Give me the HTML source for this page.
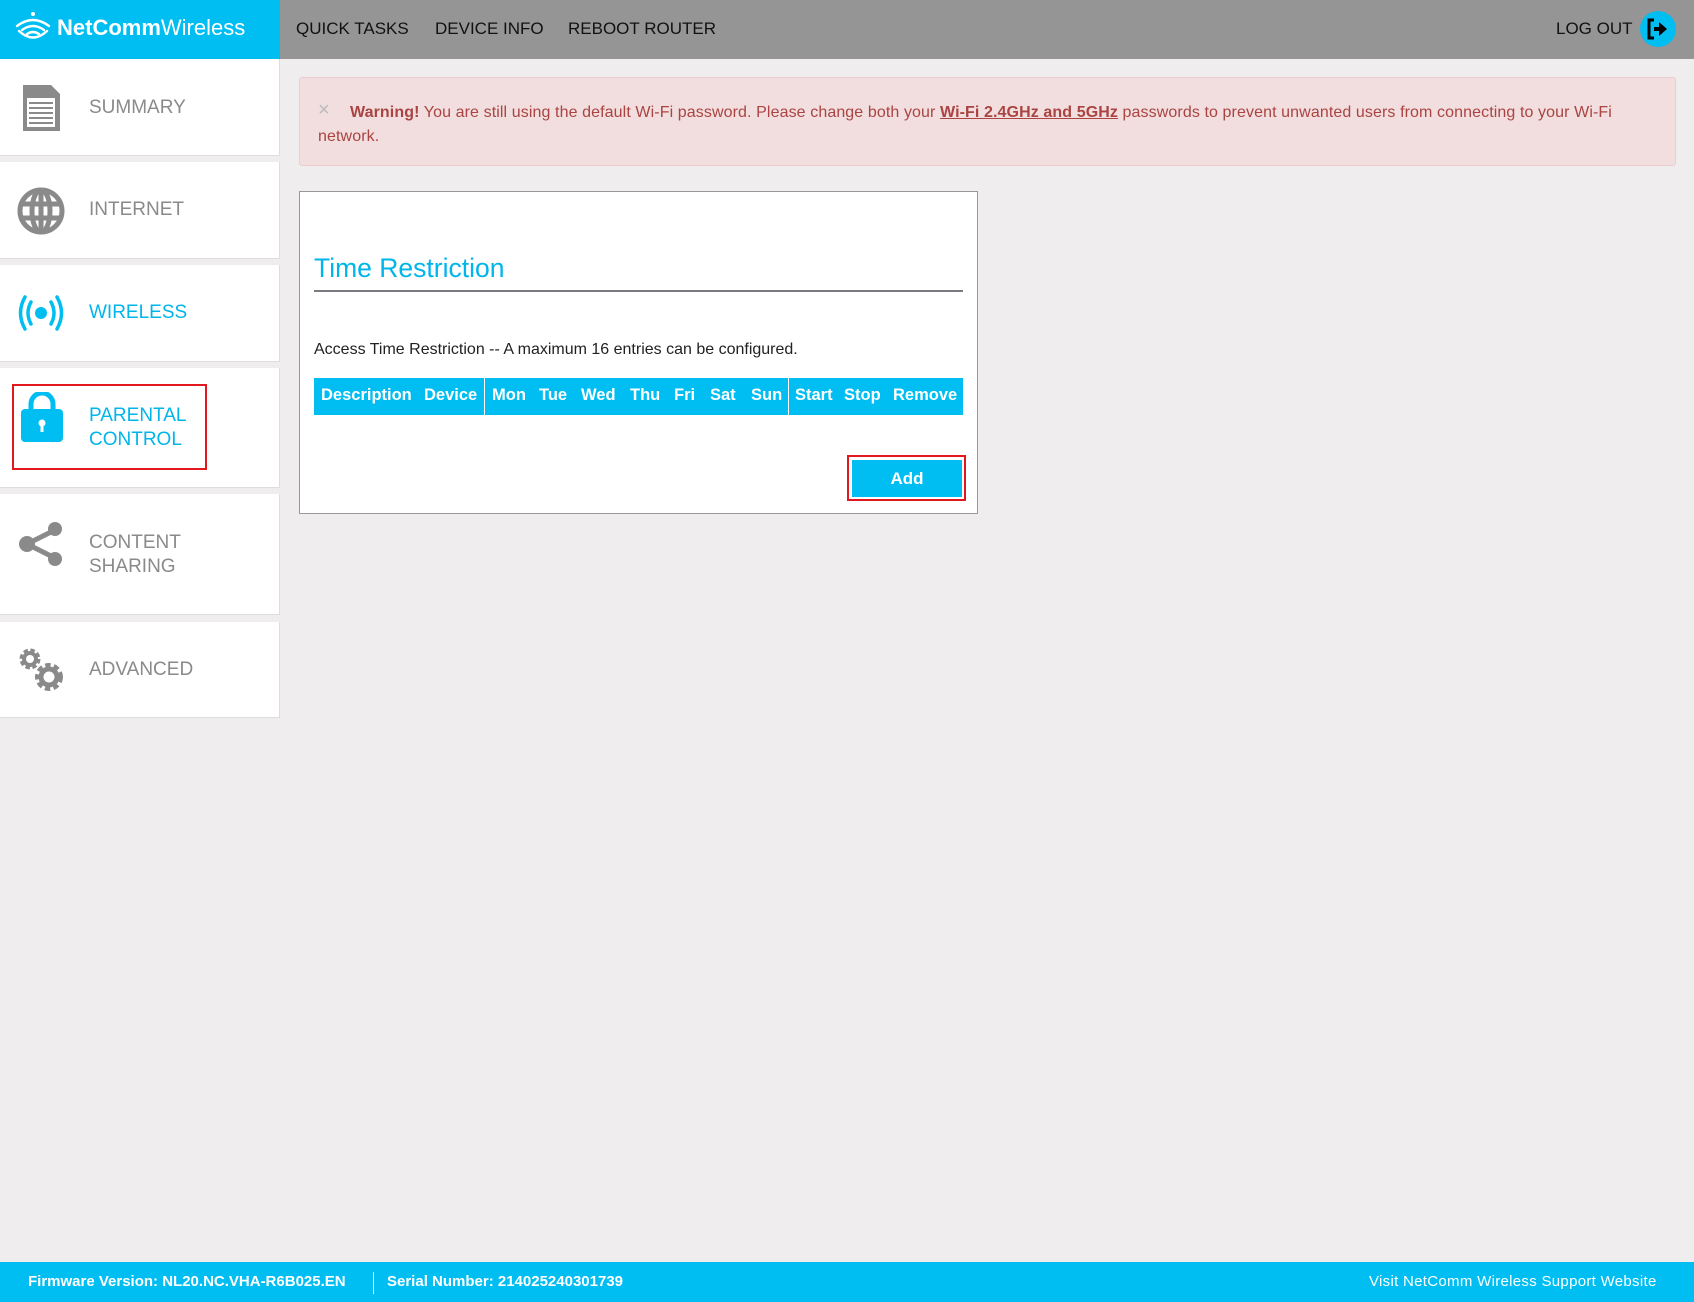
<!DOCTYPE html>
<html><head><meta charset="utf-8"><style>
*{margin:0;padding:0;box-sizing:border-box}
body{width:1694px;height:1302px;background:#efedee;font-family:"Liberation Sans",sans-serif;position:relative;overflow:hidden}
.a{position:absolute}
.hdr{left:0;top:0;width:1694px;height:59px;background:#959595}
.logo{left:0;top:0;width:280px;height:59px;background:#00bef2;color:#fff;font-size:22px;font-weight:bold}
.nav{top:19px;font-size:17px;color:#111}
.side{left:0;width:280px;background:#fff;border-right:1px solid #ddd;border-bottom:1px solid #ddd}
.lbl{left:89px;font-size:19px;color:#8a8a8a;line-height:24px}
.blue{color:#00b5ea}
.th{top:386px;color:#fff;font-size:16.5px;font-weight:bold}
.ft{top:1273px;color:#fff;font-size:15px;font-weight:bold}
</style></head><body>
<div class="a hdr"></div>
<div class="a logo">
<svg class="a" style="left:14px;top:10px" width="38" height="32" viewBox="0 0 38 32"><g fill="none" stroke="#fff" stroke-width="2.4" stroke-linecap="round"><path d="M3 16 Q19 4 35 16"/><path d="M8 20 Q19 12 30 20"/><path d="M13 24 Q19 20 25 24"/><path d="M5 21 Q19 34 33 21"/></g><circle cx="19" cy="4" r="2" fill="#fff"/></svg>
<span class="a" style="left:57px;top:15px">NetComm<span style="font-weight:normal">Wireless</span></span></div>
<span class="a nav" style="left:296px">QUICK TASKS</span>
<span class="a nav" style="left:435px">DEVICE INFO</span>
<span class="a nav" style="left:568px">REBOOT ROUTER</span>
<span class="a nav" style="left:1556px">LOG OUT</span>
<div class="a" style="left:1640px;top:11px;width:36px;height:36px;border-radius:50%;background:#00bef2"></div>
<svg class="a" style="left:1646px;top:17px" width="24" height="24" viewBox="0 0 24 24"><path d="M8 3H3v18h5" fill="none" stroke="#000" stroke-width="3"/><path d="M8 12h9" stroke="#000" stroke-width="4"/><path d="M13 5l8 7-8 7z" fill="#000"/></svg>

<div class="a side" style="top:59px;height:97px"></div>
<div class="a side" style="top:162px;height:97px"></div>
<div class="a side" style="top:265px;height:97px"></div>
<div class="a side" style="top:368px;height:120px"></div>
<div class="a side" style="top:494px;height:121px"></div>
<div class="a side" style="top:622px;height:96px"></div>

<svg class="a" style="left:20px;top:83px" width="42" height="50" viewBox="0 0 42 50"><path d="M3 2h28l9 9v37H3z" fill="#8a8a8a"/><rect x="7" y="15" width="28" height="29" fill="#fff"/><g stroke="#8a8a8a" stroke-width="2"><path d="M9 20h24M9 25h24M9 30h24M9 35h24M9 40h24"/></g></svg>
<span class="a lbl" style="top:96px">SUMMARY</span>
<svg class="a" style="left:16px;top:186px" width="50" height="50" viewBox="0 0 50 50"><g fill="none" stroke="#8a8a8a" stroke-width="5"><circle cx="25" cy="25" r="21"/><ellipse cx="25" cy="25" rx="9" ry="21"/><path d="M4 18h42M4 32h42M25 4v42"/></g></svg>
<span class="a lbl" style="top:198px">INTERNET</span>
<svg class="a" style="left:16px;top:293px" width="50" height="40" viewBox="0 0 50 40"><g fill="none" stroke="#00bef2" stroke-width="3.5" stroke-linecap="round"><path d="M9 4Q0 20 9 36M41 4Q50 20 41 36M15 9Q9 20 15 31M35 9Q41 20 35 31"/></g><circle cx="25" cy="20" r="6" fill="#00bef2"/></svg>
<span class="a lbl blue" style="top:301px">WIRELESS</span>
<svg class="a" style="left:21px;top:392px" width="42" height="50" viewBox="0 0 42 50"><path d="M10 18V12a11 11 0 0 1 22 0v6" fill="none" stroke="#00bef2" stroke-width="5"/><rect x="0" y="17" width="42" height="33" rx="4" fill="#00bef2"/><circle cx="21" cy="31" r="3.5" fill="#fff"/><rect x="19.5" y="31" width="3" height="9" fill="#fff"/></svg>
<span class="a lbl blue" style="top:404px">PARENTAL<br>CONTROL</span>
<div class="a" style="left:12px;top:384px;width:195px;height:86px;border:2px solid #e3181f"></div>
<svg class="a" style="left:17px;top:520px" width="48" height="48" viewBox="0 0 48 48"><path d="M10 24L38 10M10 24L38 38" stroke="#8a8a8a" stroke-width="5"/><circle cx="10" cy="24" r="8" fill="#8a8a8a"/><circle cx="38" cy="9" r="7" fill="#8a8a8a"/><circle cx="38" cy="39" r="7" fill="#8a8a8a"/></svg>
<span class="a lbl" style="top:531px">CONTENT<br>SHARING</span>
<svg class="a" style="left:17px;top:645px" width="50" height="50" viewBox="0 0 50 50"><g fill="none" stroke="#8a8a8a"><circle cx="13" cy="14" r="8" stroke-width="5" stroke-dasharray="4 2.3"/><circle cx="13" cy="14" r="6" stroke-width="4"/><circle cx="32" cy="32" r="11" stroke-width="6" stroke-dasharray="5 3"/><circle cx="32" cy="32" r="8" stroke-width="5"/></g></svg>
<span class="a lbl" style="top:658px">ADVANCED</span>

<div class="a" style="left:299px;top:77px;width:1377px;height:89px;background:#f2dede;border:1px solid #ebccd1;border-radius:3px"></div>
<span class="a" style="left:318px;top:100px;color:#bbb;font-size:20px;line-height:20px">×</span>
<div class="a" style="left:318px;top:101px;width:1350px;font-size:16px;color:#a94442;line-height:24px;text-indent:32px;letter-spacing:0.1px"><b>Warning!</b> You are still using the default Wi-Fi password. Please change both your <b><u>Wi-Fi 2.4GHz and 5GHz</u></b> passwords to prevent unwanted users from connecting to your Wi-Fi<br>network.</div>

<div class="a" style="left:299px;top:191px;width:679px;height:323px;background:#fff;border:1px solid #999"></div>
<span class="a" style="left:314px;top:253px;font-size:26.5px;color:#00b5ea">Time Restriction</span>
<div class="a" style="left:314px;top:290px;width:649px;height:2px;background:#7a7a80"></div>
<span class="a" style="left:314px;top:341px;font-size:16px;color:#222">Access Time Restriction -- A maximum 16 entries can be configured.</span>
<div class="a" style="left:314px;top:378px;width:649px;height:37px;background:#00bef2"></div>
<div class="a" style="left:484px;top:378px;width:1px;height:37px;background:#fff"></div>
<div class="a" style="left:788px;top:378px;width:1px;height:37px;background:#fff"></div>
<span class="a th" style="left:321px">Description</span>
<span class="a th" style="left:424px">Device</span>
<span class="a th" style="left:492px">Mon</span>
<span class="a th" style="left:539px">Tue</span>
<span class="a th" style="left:581px">Wed</span>
<span class="a th" style="left:630px">Thu</span>
<span class="a th" style="left:674px">Fri</span>
<span class="a th" style="left:710px">Sat</span>
<span class="a th" style="left:751px">Sun</span>
<span class="a th" style="left:795px">Start</span>
<span class="a th" style="left:844px">Stop</span>
<span class="a th" style="left:893px">Remove</span>
<div class="a" style="left:847px;top:455px;width:119px;height:46px;border:2px solid #e3181f"></div>
<div class="a" style="left:852px;top:460px;width:110px;height:37px;background:#00bef2;color:#fff;font-size:17px;font-weight:bold;text-align:center;line-height:37px">Add</div>

<div class="a" style="left:0;top:1262px;width:1694px;height:40px;background:#00bef2"></div>
<span class="a ft" style="left:28px">Firmware Version: NL20.NC.VHA-R6B025.EN</span>
<div class="a" style="left:373px;top:1272px;width:1px;height:22px;background:#fff"></div>
<span class="a ft" style="left:387px">Serial Number: 214025240301739</span>
<span class="a ft" style="left:1369px;font-weight:normal;letter-spacing:0.3px">Visit NetComm Wireless Support Website</span>
</body></html>
